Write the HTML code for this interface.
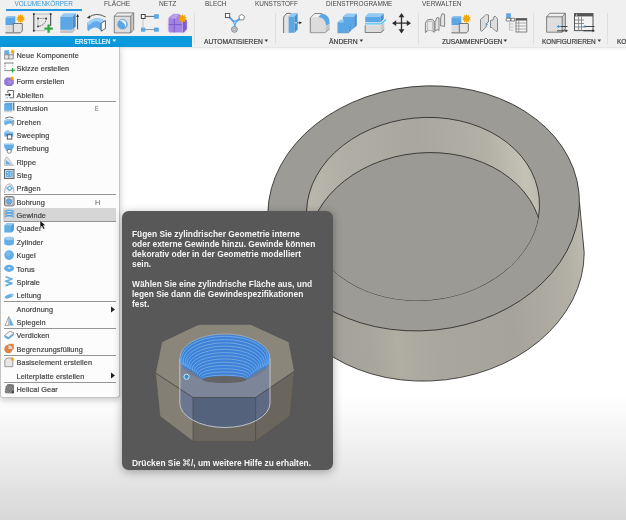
<!DOCTYPE html>
<html><head><meta charset="utf-8">
<style>
*{margin:0;padding:0;box-sizing:border-box}
html,body{width:626px;height:520px;overflow:hidden}
body{position:relative;will-change:transform;font-family:"Liberation Sans",sans-serif;background:linear-gradient(to bottom,#ffffff 0px,#ffffff 395px,#f2f2f2 440px,#dedede 500px,#d8d8d8 520px)}
.abs{position:absolute}
#tb{position:absolute;left:0;top:0;width:626px;height:47px;background:#f0f0f0}
#tbsh{position:absolute;left:0;top:46.5px;width:626px;height:4.5px;background:linear-gradient(to bottom,#dedede,rgba(240,240,240,0.6) 40%,rgba(255,255,255,0))}
.tab{position:absolute;top:-0.1px;font-size:6.4px;color:#484848;white-space:nowrap;line-height:8px}
.lbl{position:absolute;top:37px;font-size:6.7px;color:#3e3e3e;-webkit-text-stroke:0.2px #3e3e3e;white-space:nowrap;line-height:9px}
.tri{position:absolute;top:39.6px;width:0;height:0;border-left:1.8px solid transparent;border-right:1.8px solid transparent;border-top:2.4px solid #3a3a3a}
.sep{position:absolute;top:13px;width:1px;height:31px;background:#dfdfdf}
#menu{position:absolute;left:0;top:47px;width:120px;height:351.3px;background:#fcfcfc;border:1px solid #c4c4c4;border-top:none;border-radius:0 0 3px 3px;box-shadow:0 2px 6px rgba(0,0,0,.22)}
.mi{position:absolute;left:16.5px;font-size:7.3px;color:#444444;letter-spacing:0.1px;-webkit-text-stroke:0.2px #444444;white-space:nowrap;line-height:10px}
.ms{position:absolute;left:3.8px;width:112.5px;height:1px;background:#959595}
#tip{position:absolute;left:122px;top:211px;width:211px;height:259px;background:#585858;border-radius:6.5px;box-shadow:0 2px 10px rgba(0,0,0,.32)}
.tt{position:absolute;left:10px;font-size:8.4px;font-weight:bold;color:#f5f5f5;line-height:10px;white-space:nowrap}
</style></head><body>

<!-- 3D ring -->
<svg class="abs" style="left:0;top:0" width="626" height="520" viewBox="0 0 626 520"><defs>
<linearGradient id="side" gradientUnits="userSpaceOnUse" x1="268" y1="0" x2="586" y2="0">
<stop offset="0" stop-color="#9f9d95"/><stop offset="0.3" stop-color="#a8a59c"/><stop offset="0.38" stop-color="#b0ada3"/><stop offset="0.5" stop-color="#a9a69d"/><stop offset="0.75" stop-color="#a6a39b"/><stop offset="0.93" stop-color="#b1aea4"/><stop offset="1" stop-color="#bdbaaf"/>
</linearGradient>
<linearGradient id="wall" gradientUnits="userSpaceOnUse" x1="306" y1="0" x2="540" y2="0">
<stop offset="0" stop-color="#bab7ac"/><stop offset="0.2" stop-color="#b0aea4"/><stop offset="0.5" stop-color="#a8a69e"/><stop offset="0.8" stop-color="#b3b0a6"/><stop offset="0.95" stop-color="#c4c1b5"/><stop offset="1" stop-color="#bdbab0"/>
</linearGradient>

<clipPath id="holeclip"><ellipse cx="423.01" cy="208.94" rx="116.7" ry="91.3" transform="rotate(-5.44 423.01 208.94)"/></clipPath>
</defs>
<path d="M579.46,202.21 L584.19,252.92 L276.69,264.64 L267.84,214.55 Z" fill="url(#side)"/>
<ellipse cx="430.44" cy="258.78" rx="154.05" ry="121.98" transform="rotate(-5.87 430.44 258.78)" fill="url(#side)"/>
<path d="M584.19,252.92 A154.05,121.98 -5.87 0 1 276.69,264.64" fill="none" stroke="#262626" stroke-width="0.8"/>
<path d="M579.46,202.21 L584.19,252.92" stroke="#262626" stroke-width="0.8"/>
<ellipse cx="423.65" cy="208.38" rx="156.13" ry="122.16" transform="rotate(-5.87 423.65 208.38)" fill="#9c9b96" stroke="#262626" stroke-width="0.8"/>
<ellipse cx="423.01" cy="208.94" rx="116.7" ry="91.3" transform="rotate(-5.44 423.01 208.94)" fill="url(#wall)" stroke="#262626" stroke-width="0.8"/>
<g clip-path="url(#holeclip)"><ellipse cx="425.01" cy="244.54" rx="117.24" ry="91.72" transform="rotate(-5.44 425.01 244.54)" fill="#9b9a95" stroke="#262626" stroke-width="0.8"/></g></svg>
<!-- toolbar -->
<div id="tb">
<div class="tab" style="left:14.4px;font-size:6.4px;transform:scaleX(1.000);transform-origin:0 0;color:#3598d8">VOLUMENKÖRPER</div>
<div class="abs" style="left:6.3px;top:9.2px;width:76px;height:2px;background:#1f9ae0"></div>
<div class="tab" style="left:103.8px;font-size:6.4px;transform:scaleX(1.038);transform-origin:0 0;">FLÄCHE</div>
<div class="tab" style="left:159.2px;font-size:6.4px;transform:scaleX(1.041);transform-origin:0 0;">NETZ</div>
<div class="tab" style="left:205.4px;font-size:6.4px;transform:scaleX(1.008);transform-origin:0 0;">BLECH</div>
<div class="tab" style="left:254.8px;font-size:6.4px;transform:scaleX(1.008);transform-origin:0 0;">KUNSTSTOFF</div>
<div class="tab" style="left:326.2px;font-size:6.4px;transform:scaleX(1.005);transform-origin:0 0;">DIENSTPROGRAMME</div>
<div class="tab" style="left:421.8px;font-size:6.4px;transform:scaleX(1.015);transform-origin:0 0;">VERWALTEN</div>
<div class="abs" style="left:0;top:36px;width:192px;height:11px;background:#0b9ade"></div>
<div class="lbl" style="left:74.8px;font-size:6.7px;transform:scaleX(0.903);transform-origin:0 0;color:#fff;-webkit-text-stroke:0.2px #fff">ERSTELLEN</div>
<svg class="abs" style="left:112.1px;top:39px" width="5" height="4" viewBox="0 0 5 4"><path d="M0.5 0.6 H4.1 L2.3 2.9 Z" fill="#fff"/></svg>
<div class="sep" style="left:194px"></div>
<div class="lbl" style="left:204.0px;font-size:6.7px;transform:scaleX(0.998);transform-origin:0 0;">AUTOMATISIEREN</div>
<svg class="abs" style="left:263.7px;top:39px" width="5" height="4" viewBox="0 0 5 4"><path d="M0.5 0.6 H4.1 L2.3 2.9 Z" fill="#3a3a3a"/></svg>
<div class="sep" style="left:275px"></div>
<div class="lbl" style="left:329.3px;font-size:6.7px;transform:scaleX(1.014);transform-origin:0 0;">ÄNDERN</div>
<svg class="abs" style="left:358.5px;top:39px" width="5" height="4" viewBox="0 0 5 4"><path d="M0.5 0.6 H4.1 L2.3 2.9 Z" fill="#3a3a3a"/></svg>
<div class="sep" style="left:418px"></div>
<div class="lbl" style="left:441.6px;font-size:6.7px;transform:scaleX(0.982);transform-origin:0 0;">ZUSAMMENFÜGEN</div>
<svg class="abs" style="left:502.5px;top:39px" width="5" height="4" viewBox="0 0 5 4"><path d="M0.5 0.6 H4.1 L2.3 2.9 Z" fill="#3a3a3a"/></svg>
<div class="sep" style="left:533px"></div>
<div class="lbl" style="left:541.7px;font-size:6.7px;transform:scaleX(0.965);transform-origin:0 0;">KONFIGURIEREN</div>
<svg class="abs" style="left:597.3px;top:39px" width="5" height="4" viewBox="0 0 5 4"><path d="M0.5 0.6 H4.1 L2.3 2.9 Z" fill="#3a3a3a"/></svg>
<div class="sep" style="left:607px"></div>
<div class="lbl" style="left:616.8px;font-size:6.7px;transform:scaleX(0.965);transform-origin:0 0;">KONFIGURIEREN</div>

<svg class="abs" style="left:0;top:0" width="626" height="47" viewBox="0 0 626 47"><g transform="translate(0,0)">
<path d="M5.5 19 Q5.5 16.2 8.3 16.2 H15.3 V25 H5.5 Z" fill="#5ba6e4"/>
<path d="M5.5 19 Q5.5 16.2 8.3 16.2 H15.3 L14 18 H6.5 Z" fill="#93c9f3" opacity=".7"/>
<rect x="5.5" y="25" width="7.8" height="7.6" fill="#dcdcdc"/>
<path d="M13.3 23.5 H22.5 V31 L20.5 32.6 H13.3 Z" fill="#e4e4e4"/>
<path d="M13.3 23.3 V32.8 M13.3 23.5 H22 M22.3 23.5 V31 L20.5 32.8 H5.5" stroke="#666" stroke-width=".9" fill="none"/>
<path d="M5.5 32.8 H20.5" stroke="#9a9a9a" stroke-width="1"/>
<polygon points="20.60,14.00 21.50,15.84 23.30,14.88 22.95,16.90 24.97,17.18 23.50,18.60 24.97,20.02 22.95,20.30 23.30,22.32 21.50,21.36 20.60,23.20 19.70,21.36 17.90,22.32 18.25,20.30 16.23,20.02 17.70,18.60 16.23,17.18 18.25,16.90 17.90,14.88 19.70,15.84" fill="#f5a500"/>
</g>
<rect x="33.8" y="14" width="16.9" height="16.7" fill="#e9e9e9"/>
<path d="M33.8 14 V30.7 M50.7 14 V26" stroke="#3a3a3a" stroke-width="1"/>
<path d="M33.8 14 H50.7 M33.8 30.7 H45" stroke="#b5b5b5" stroke-width=".9"/>
<circle cx="33.8" cy="14" r="1" fill="#333"/><circle cx="50.7" cy="14" r="1" fill="#333"/><circle cx="33.8" cy="30.7" r="1" fill="#333"/>
<path d="M38 18.4 H46.2" stroke="#555" stroke-width=".7" stroke-dasharray="1.4 .8"/>
<path d="M38 18.4 V26.4" stroke="#aaa" stroke-width=".7"/>
<path d="M46.2 18.4 Q45.5 25.5 38 26.4" stroke="#444" stroke-width=".8" fill="none" stroke-dasharray="1.6 .8"/>
<circle cx="38" cy="18.4" r=".9" fill="#333"/><circle cx="46.2" cy="18.4" r=".9" fill="#333"/><circle cx="38" cy="26.4" r=".9" fill="#333"/>
<path d="M44.4 28.6 H52.8 M48.6 24.4 V32.8" stroke="#2fa83d" stroke-width="2.3"/>
<path d="M60.3 29.8 H72.4 L75.2 27 V29.8 L72.4 32.9 H60.3 Z" fill="#c4c4c4"/>
<path d="M60.3 29.8 H72.4 L75.2 27" stroke="#f4f4f4" stroke-width=".8" fill="none"/>
<path d="M60.3 16.9 H72.39999999999999 V29.799999999999997 H60.3 Z" fill="#5ba6e4"/><path d="M60.3 16.9 L63.599999999999994 13.27 H75.69999999999999 L72.39999999999999 16.9 Z" fill="#93c9f3"/><path d="M72.39999999999999 16.9 L75.69999999999999 13.27 V26.169999999999998 L72.39999999999999 29.799999999999997 Z" fill="#4690d2"/>
<path d="M77.6 29.4 V16" stroke="#333" stroke-width=".9"/><path d="M76.2 17 L77.6 13.8 L79 17 Z" fill="#333"/>
<path d="M88.8 17.2 Q96.5 11.8 105.6 17" stroke="#333" stroke-width=".8" fill="none"/>
<path d="M86.8 17.9 L89.9 15.3 L90.2 18.6 Z" fill="#333"/>
<path d="M87.3 22.8 Q95.5 14.8 104.6 20.6 L105.6 20.6 V28.6 L101.2 31.2 Q95.5 24 88.3 31.2 L87.3 29.5 Z" fill="#62aaea"/>
<path d="M87.3 22.8 Q95.5 14.8 104.6 20.6 L101.2 23.1 Q95 18.6 89 25.2 Z" fill="#a0d1f6"/>
<path d="M101.2 23.1 L105.4 20.6 V28.6 L101.2 31.2 Z" fill="#fff" stroke="#333" stroke-width=".7"/>
<path d="M114.3 16.2 H130.7 V32.9 H114.3 Z" fill="#dedede"/><path d="M114.3 16.2 L117.3 12.899999999999999 H133.7 L130.7 16.2 Z" fill="#f0f0f0"/><path d="M130.7 16.2 L133.7 12.899999999999999 V29.599999999999998 L130.7 32.9 Z" fill="#c9c9c9"/><path d="M114.3 16.2 L117.3 12.899999999999999 H133.7 V29.599999999999998 L130.7 32.9 H114.3 Z M114.3 16.2 H130.7 L133.7 12.899999999999999 M130.7 16.2 V32.9" fill="none" stroke="#5a5a5a" stroke-width=".7"/>
<circle cx="122.5" cy="24.3" r="5" fill="#5ba6e4" stroke="#9a9a9a" stroke-width=".8" stroke-dasharray="1.2 .6"/>
<path d="M119.5 20.3 Q124 19 126 22 Q127 25 125.5 27 Q124.8 22.5 119.5 20.3 Z" fill="#f4f4f4"/>
<path d="M145 16.4 H154" stroke="#555" stroke-width=".9"/>
<path d="M143 18.6 V27.7" stroke="#bdbdbd" stroke-width=".9"/>
<path d="M145 29.6 H154" stroke="#8a8a8a" stroke-width=".9"/>
<rect x="141.3" y="14.5" width="3.8" height="4" fill="#fff" stroke="#333" stroke-width=".9"/>
<rect x="154" y="14.2" width="4.8" height="4.5" fill="#5ba6e4"/>
<rect x="141" y="27.6" width="4.2" height="4.1" fill="#5ba6e4"/>
<rect x="154" y="27.6" width="4.8" height="4.1" fill="#5ba6e4"/>
<path d="M168.3 20 Q168.3 17.5 170.5 16 L173.5 14 H179 L185.5 19 Q187 20.5 187 22.5 V29 L184 32.6 H171 Q168.3 32.6 168.3 30 Z" fill="#a283e4" stroke="#c9b6f2" stroke-width=".7"/>
<path d="M168.8 19.5 L173.8 14.5 H179 L176 18.5 H170 Z" fill="#b9a2ee"/>
<path d="M182.5 22.5 L186.6 20 V29 L183.5 32.3 H182.5 Z" fill="#7e5dcc"/>
<path d="M174.3 19 V32.3 M168.8 24.6 H182.3" stroke="#7a55c8" stroke-width=".9"/>
<path d="M182.3 19 V32.5" stroke="#d2c3f5" stroke-width=".6"/>
<polygon points="182.60,13.80 183.40,15.93 185.30,14.68 184.70,16.87 186.97,16.98 185.20,18.40 186.97,19.82 184.70,19.93 185.30,22.12 183.40,20.87 182.60,23.00 181.80,20.87 179.90,22.12 180.50,19.93 178.23,19.82 180.00,18.40 178.23,16.98 180.50,16.87 179.90,14.68 181.80,15.93" fill="#f5a500"/>
<path d="M228.6 16.4 L233.4 21.4 M240.3 18.6 L236.2 21.4" stroke="#4fa1e2" stroke-width="1.9"/>
<path d="M232.2 20.6 H237.4 L234.8 26.6 Z" fill="#4fa1e2"/><path d="M233.9 21.8 H235.8 L234.85 24 Z" fill="#e8e8e8"/>
<path d="M234.8 25 V27" stroke="#4fa1e2" stroke-width="1.2"/>
<rect x="225.4" y="13.5" width="4.3" height="4.1" fill="#fff" stroke="#505050" stroke-width=".9"/>
<polygon points="241.7,14.4 244.6,16.5 243.5,19.9 239.9,19.9 238.8,16.5" fill="#fff" stroke="#6a6a6a" stroke-width=".8"/>
<circle cx="234.4" cy="29.4" r="2.9" fill="#d6d6d6" stroke="#7a8a98" stroke-width="1"/><circle cx="234.4" cy="29.4" r="1.3" fill="none" stroke="#8a8a8a" stroke-width=".6"/>
<path d="M283.6 17 L286.6 13.4 H291 V33 H283.6 Z" fill="#e3e3e3"/>
<path d="M283.6 33 V17 L286.6 13.4 H291" stroke="#555" stroke-width=".8" fill="none"/>
<path d="M288.6 16.4 H294.6 V32.8 H288.6 Z" fill="#5ba6e4"/><path d="M288.6 16.4 L291.6 13.099999999999998 H297.6 L294.6 16.4 Z" fill="#93c9f3"/><path d="M294.6 16.4 L297.6 13.099999999999998 V29.499999999999996 L294.6 32.8 Z" fill="#4690d2"/>
<path d="M295 22.8 H299.8" stroke="#fff" stroke-width=".9"/><path d="M297 22.8 H300" stroke="#333" stroke-width=".8"/><path d="M299.3 21.3 L302 22.8 L299.3 24.3 Z" fill="#333"/>
<path d="M310.3 17.9 L314.7 13.5 H321.7 Q329.8 14.5 329.6 24 V28.9 L325.2 32.6 H310.3 Z" fill="#dcdcdc"/>
<path d="M314.7 13.5 H321.7 L318.2 17 Q314 16.8 310.3 17.9 Z" fill="#f2f2f2"/>
<path d="M321.7 13.5 Q329.8 14.5 329.6 24 L326.1 25.4 Q325.5 17.8 318.2 17 Z" fill="#5ba6e4"/>
<path d="M326.1 25.4 L329.6 24 V28.9 L325.2 32.6 Z" fill="#c6c6c6"/>
<path d="M310.3 32.8 V17.9 L314.7 13.5 H321.7" stroke="#6a6a6a" stroke-width=".8" fill="none"/>
<path d="M310.3 32.7 H325.2 L329.6 28.9" stroke="#777" stroke-width=".7" fill="none"/>
<path d="M342.8 16.6 L346.3 13.5 H356.8 L354.2 16.6 Z" fill="#93c9f3"/>
<path d="M342.8 16.6 H354.2 V28 H342.8 Z" fill="#5ba6e4"/>
<path d="M354.2 16.6 L356.8 13.5 V25.4 L354.2 28 Z" fill="#4690d2"/>
<path d="M337.5 22.3 L340.1 19.7 H343.7 V22.3 Z" fill="#93c9f3"/>
<path d="M337.5 22.3 H348.5 V32.9 H337.5 Z" fill="#5ba6e4"/>
<path d="M348.5 28 L350.9 26.2 V30.3 L348.5 32.9 Z" fill="#4690d2"/>
<path d="M348.5 28 H354.2 L350.9 30.3 Z" fill="#5ba6e4"/>
<path d="M337.5 32.9 H348.5 L350.9 30.3" stroke="#5a86b0" stroke-width=".5" fill="none"/>
<path d="M365.2 16.5 H380.7 V22.3 H365.2 Z" fill="#5ba6e4"/><path d="M365.2 16.5 L368.2 13.2 H383.7 L380.7 16.5 Z" fill="#93c9f3"/><path d="M380.7 16.5 L383.7 13.2 V19.0 L380.7 22.3 Z" fill="#4690d2"/>
<path d="M365 23.8 H381.2 L386 19.6" stroke="#4cc0f5" stroke-width="1.3" fill="none"/>
<path d="M365.2 25.2 H381 L384.2 22.4 V29.7 L381 32.5 H365.2 Z" fill="#dcdcdc"/>
<path d="M381 25.2 L384.2 22.4 V29.7 L381 32.5 Z" fill="#c8c8c8"/>
<path d="M365.2 25.2 V32.5 H381 L384.2 29.7" stroke="#666" stroke-width=".8" fill="none"/>
<path d="M401.5 16 V30.5 M394.5 23.2 H409" stroke="#2e2e2e" stroke-width="1.3"/>
<path d="M401.5 13 L398.6 17.2 H404.4 Z M401.5 33.5 L398.6 29.2 H404.4 Z M392 23.2 L396.2 20.3 V26.1 Z M411 23.2 L406.8 20.3 V26.1 Z" fill="#2e2e2e"/>
<path d="M425.4 32.5 V23 L427.5 19.7 L432.4 19.3 L434.2 21.2 V32.3 L432.6 31 L428.5 30 Z" fill="#dedede" stroke="#6e6e6e" stroke-width=".8" stroke-linejoin="round"/>
<path d="M427.6 30 V21.5 H432.4 V30.8" fill="#ececec" stroke="#9a9a9a" stroke-width=".5"/>
<path d="M435 31 V22.2 L436.9 17.6 L439 17.9 V30.6 L437.6 29.5 Z" fill="#e2e2e2" stroke="#6e6e6e" stroke-width=".8" stroke-linejoin="round"/>
<path d="M440.6 26 V17.5 L442.1 13.6 L444.6 14.5 V26.6 L443 26 Z" fill="#e4e4e4" stroke="#6e6e6e" stroke-width=".8" stroke-linejoin="round"/>
<g transform="translate(446,0)">
<path d="M5.5 19 Q5.5 16.2 8.3 16.2 H15.3 V25 H5.5 Z" fill="#5ba6e4"/>
<path d="M5.5 19 Q5.5 16.2 8.3 16.2 H15.3 L14 18 H6.5 Z" fill="#93c9f3" opacity=".7"/>
<rect x="5.5" y="25" width="7.8" height="7.6" fill="#dcdcdc"/>
<path d="M13.3 23.5 H22.5 V31 L20.5 32.6 H13.3 Z" fill="#e4e4e4"/>
<path d="M13.3 23.3 V32.8 M13.3 23.5 H22 M22.3 23.5 V31 L20.5 32.8 H5.5" stroke="#666" stroke-width=".9" fill="none"/>
<path d="M5.5 32.8 H20.5" stroke="#9a9a9a" stroke-width="1"/>
<polygon points="20.60,14.00 21.50,15.84 23.30,14.88 22.95,16.90 24.97,17.18 23.50,18.60 24.97,20.02 22.95,20.30 23.30,22.32 21.50,21.36 20.60,23.20 19.70,21.36 17.90,22.32 18.25,20.30 16.23,20.02 17.70,18.60 16.23,17.18 18.25,16.90 17.90,14.88 19.70,15.84" fill="#f5a500"/>
</g>
<path d="M480.5 19.5 L486 14.6 L488.5 15 V22 L486.2 23 V27 L481.5 31.5 L480.5 30 Z" fill="#dcdcdc" stroke="#707070" stroke-width=".8" stroke-linejoin="round"/>
<path d="M486 14.8 V23" stroke="#f2f2f2" stroke-width=".9"/>
<circle cx="486.9" cy="24.2" r="1" fill="#4aa3ea"/>
<path d="M490.5 20.5 L493 20 L494 16.5 L495.5 16.5 L497.5 19 V31 L496 31.5 L492 27.5 H490.5 Z" fill="#dedede" stroke="#707070" stroke-width=".8" stroke-linejoin="round"/>
<rect x="506.2" y="13.3" width="4.6" height="4.8" fill="#5ba6e4"/>
<path d="M506.2 18.3 H510.6 V21 H506.2 Z M511 18.3 H514.6 V21 H511 Z" fill="#fff" stroke="#555" stroke-width=".7"/>
<path d="M509.5 21.5 V30.5 M509.5 24 H513.5 M509.5 27 H513.5 M509.5 30 H513.5" stroke="#aaa" stroke-width=".6"/>
<rect x="516" y="18.5" width="10.8" height="13.5" fill="#f6f6f6" stroke="#666" stroke-width=".8"/>
<rect x="516" y="18.5" width="10.8" height="2" fill="#555"/>
<path d="M516 23 H526.8 M516 26 H526.8 M516 29 H526.8 M518.8 20.5 V32" stroke="#777" stroke-width=".6"/>
<path d="M546.6 16.8 H562.2 V32.2 H546.6 Z" fill="#dedede"/><path d="M546.6 16.8 L549.8000000000001 13.280000000000001 H565.4000000000001 L562.2 16.8 Z" fill="#eeeeee"/><path d="M562.2 16.8 L565.4000000000001 13.280000000000001 V28.680000000000003 L562.2 32.2 Z" fill="#cfcfcf"/><path d="M546.6 16.8 L549.8000000000001 13.280000000000001 H565.4000000000001 V28.680000000000003 L562.2 32.2 H546.6 Z M546.6 16.8 H562.2 L565.4000000000001 13.280000000000001 M562.2 16.8 V32.2" fill="none" stroke="#555" stroke-width=".7"/>
<path d="M558 26.5 H567.5 M557 30.8 H566.5" stroke="#333" stroke-width=".9"/>
<path d="M556.5 26.5 L559 25 V28 Z" fill="#3a8fd8"/><path d="M568 30.8 L565.5 29.3 V32.3 Z" fill="#333"/>
<path d="M558 26.5 H561" stroke="#3a8fd8" stroke-width="1"/>
<rect x="574.5" y="13.6" width="18.5" height="17" fill="#f4f4f4" stroke="#555" stroke-width="1"/>
<rect x="574.5" y="13.6" width="18.5" height="2.8" fill="#555"/>
<circle cx="576.6" cy="15" r=".7" fill="#ddd"/>
<path d="M575 20 H584 M575 23.5 H584 M575 27 H584 M578.6 16.4 V30.5 M581.5 16.4 V30.5" stroke="#777" stroke-width=".8"/>
<path d="M584.5 26.5 H594.5 M583.5 30.8 H593.5" stroke="#333" stroke-width=".9"/>
<path d="M583 26.5 L585.5 25 V28 Z" fill="#3a8fd8"/><path d="M595 30.8 L592.5 29.3 V32.3 Z" fill="#333"/></svg>
</div>

<div id="tbsh"></div>
<!-- menu -->
<div id="menu"></div>
<div class="abs" style="left:3px;top:207.9px;width:113px;height:13.1px;background:#d6d6d6"></div>
<div class="mi" style="top:50.67px">Neue Komponente</div>
<svg class="abs" style="left:4px;top:49.0px" width="11" height="11" viewBox="0 0 11 11"><path d="M0.3 2.5 Q0.3 1.3 1.5 1.3 H5 V5.8 H0.3 Z" fill="#62aee6"/><rect x="5" y="3" width="4.5" height="2.8" fill="#e4e4e4"/><path d="M0.3 5.8 H9.3 V10 H0.3 Z" fill="#e6e6e6"/><path d="M0.3 5.8 H9.3 M4.8 5.8 V10 M0.3 10 H9.3 M0.3 5.8 V10 M9.3 3 V10" stroke="#6a6a6a" stroke-width=".7" fill="none"/><polygon points="8.60,-0.20 9.02,1.38 10.44,0.56 9.62,1.98 11.20,2.40 9.62,2.82 10.44,4.24 9.02,3.42 8.60,5.00 8.18,3.42 6.76,4.24 7.58,2.82 6.00,2.40 7.58,1.98 6.76,0.56 8.18,1.38" fill="#f5a500"/></svg>
<div class="mi" style="top:64.04px">Skizze erstellen</div>
<svg class="abs" style="left:4px;top:62.37px" width="11" height="11" viewBox="0 0 11 11"><path d="M0.2 1 H9.5" stroke="#555" stroke-width=".7"/><path d="M1 1 V8.6" stroke="#555" stroke-width=".7" stroke-dasharray="1.5 .9"/><path d="M0.2 8.6 H6" stroke="#666" stroke-width=".7"/><path d="M8.6 1 V4.5" stroke="#777" stroke-width=".6" stroke-dasharray="1 .8"/><path d="M6.3 8.3 H10.9 M8.6 6 V10.6" stroke="#2fa83d" stroke-width="1.3"/></svg>
<div class="mi" style="top:77.41px">Form erstellen</div>
<svg class="abs" style="left:4px;top:75.74px" width="11" height="11" viewBox="0 0 11 11"><path d="M2.5 1.5 H6.5 L9.8 4 V8 L7.5 10 H2.5 L0.2 8 V4 Z" fill="#9478d8"/><path d="M3 5 L6.5 4 L8.5 7 L5 8.5 Z" fill="#a88fe2" opacity=".8"/><polygon points="8.20,-0.30 8.62,1.28 10.04,0.46 9.22,1.88 10.80,2.30 9.22,2.72 10.04,4.14 8.62,3.32 8.20,4.90 7.78,3.32 6.36,4.14 7.18,2.72 5.60,2.30 7.18,1.88 6.36,0.46 7.78,1.28" fill="#f5a500"/></svg>
<div class="mi" style="top:90.78px">Ableiten</div>
<svg class="abs" style="left:4px;top:89.11px" width="11" height="11" viewBox="0 0 11 11"><path d="M3.8 1.5 H9.6 V8.8 H5.5" fill="none" stroke="#444" stroke-width=".8"/><path d="M3.8 1.5 V4" stroke="#444" stroke-width=".8"/><path d="M1 5.8 H6.3" stroke="#222" stroke-width=".9"/><path d="M4.8 4 L7 5.8 L4.8 7.6 Z" fill="#222"/><path d="M1.5 8.8 H4" stroke="#444" stroke-width=".6" stroke-dasharray="1 .6"/></svg>
<div class="mi" style="top:104.15px">Extrusion</div>
<svg class="abs" style="left:4px;top:102.48px" width="11" height="11" viewBox="0 0 11 11"><path d="M0.2 8.8 H7.2 L8.5 7.8 V9.3 L7.2 10.2 H0.2 Z" fill="#d0d0d0"/><path d="M0.2 2.2 L1.7 0.7 H8.5 V7.5 L7.2 8.8 H0.2 Z" fill="#62aee6"/><path d="M0.2 2.2 H7.2 V8.8 M7.2 2.2 L8.5 0.7" stroke="#3f8fcf" stroke-width=".4" fill="none"/><path d="M9.8 0.5 V8.6" stroke="#333" stroke-width=".9"/></svg>
<div class="mi" style="top:117.52px">Drehen</div>
<svg class="abs" style="left:4px;top:115.85px" width="11" height="11" viewBox="0 0 11 11"><path d="M1 2.3 Q5 -0.3 9.5 2" stroke="#333" stroke-width=".7" fill="none"/><path d="M0.3 4.5 Q5 1.8 9.8 4.5 V8.5 Q5 6 1.5 9.5 L0.3 8 Z" fill="#62aee6"/><path d="M0.3 4.5 Q5 1.8 9.8 4.5 L8.3 5.6 Q5 3.8 1.8 5.8 Z" fill="#9ccbf0"/><path d="M8.3 5.6 L9.8 4.5 V8.5 L8.3 9.5 Z" fill="#eee" stroke="#555" stroke-width=".5"/></svg>
<div class="mi" style="top:130.89px">Sweeping</div>
<svg class="abs" style="left:4px;top:129.22px" width="11" height="11" viewBox="0 0 11 11"><path d="M0.3 3.8 Q1 1.5 4 1.2 H5 V2.5 L9.3 3 V7.5 H0.3 Z" fill="#62aee6"/><path d="M0.3 3.8 Q1 1.5 4 1.2 H5 V2.5 L9.3 3 L8 4 H1.5 Z" fill="#9ccbf0"/><rect x="3.3" y="5.8" width="4.5" height="4.3" fill="#fff" stroke="#444" stroke-width=".9"/></svg>
<div class="mi" style="top:144.26px">Erhebung</div>
<svg class="abs" style="left:4px;top:142.59px" width="11" height="11" viewBox="0 0 11 11"><path d="M0.2 0.8 H9.8 V4 L7.5 8 H2.5 L0.2 4 Z" fill="#62aee6"/><path d="M0.2 0.8 H9.8 L8.8 2 H1.2 Z" fill="#9ccbf0"/><circle cx="5.2" cy="8.3" r="2" fill="#fff" stroke="#555" stroke-width=".7"/></svg>
<div class="mi" style="top:157.63px">Rippe</div>
<svg class="abs" style="left:4px;top:155.96px" width="11" height="11" viewBox="0 0 11 11"><path d="M0.5 9.5 V4 L2.5 0.8 Q3.5 0.8 4 2 L9.5 9.5 Z" fill="#e2e2e2" stroke="#9a9a9a" stroke-width=".5"/><path d="M1.8 8.5 V4 L7.5 8.5 Z" fill="#62aee6"/></svg>
<div class="mi" style="top:171.00px">Steg</div>
<svg class="abs" style="left:4px;top:169.33px" width="11" height="11" viewBox="0 0 11 11"><rect x="0.5" y="0.5" width="9.5" height="9" fill="#d0d0d0" stroke="#5a5a5a" stroke-width=".9"/><rect x="2" y="2" width="6.5" height="6" fill="#62aee6"/><path d="M2.8 2.8 L4.5 4.5 M7.8 2.8 L6 4.5 M2.8 7.3 L4.5 5.6 M7.8 7.3 L6 5.6" stroke="#fff" stroke-width=".6"/></svg>
<div class="mi" style="top:184.37px">Prägen</div>
<svg class="abs" style="left:4px;top:182.7px" width="11" height="11" viewBox="0 0 11 11"><path d="M0.5 9.8 Q0.5 1 6 0.8 Q9.8 2 10 9.8" stroke="#9a9a9a" stroke-width=".7" fill="#f0f0f0"/><path d="M2 5 L6 2.2 L9.2 5.5 L5.2 8.2 Z" fill="#62aee6"/><path d="M4 5 L6 3.8 L7.2 5.2 L5.3 6.5 Z" fill="#fff"/></svg>
<div class="mi" style="top:197.74px">Bohrung</div>
<svg class="abs" style="left:4px;top:196.07px" width="11" height="11" viewBox="0 0 11 11"><rect x="0.5" y="0.6" width="9.5" height="9.3" rx="1.2" fill="#e0e0e0" stroke="#555" stroke-width=".8"/><rect x="1.8" y="1.8" width="7" height="7" fill="#f2f2f2" stroke="#888" stroke-width=".4"/><circle cx="5" cy="5.4" r="2.8" fill="#62aee6" stroke="#777" stroke-width=".5"/></svg>
<div class="mi" style="top:211.11px">Gewinde</div>
<svg class="abs" style="left:4px;top:209.44px" width="11" height="11" viewBox="0 0 11 11"><path d="M1 2.3 Q5 0.3 9.5 2.3 M1 5 Q5 3 9.5 5 M1 7.7 Q5 5.7 9.5 7.7" stroke="#62aee6" stroke-width="1.5" fill="none"/><path d="M1.5 3 Q5 4.5 9 3.3 M1.5 5.8 Q5 7.3 9 6" stroke="#3a84c8" stroke-width=".6" fill="none"/><path d="M0.6 1.2 V9.5 M9.8 1.2 V9.5" stroke="#888" stroke-width=".4"/></svg>
<div class="mi" style="top:224.48px">Quader</div>
<svg class="abs" style="left:4px;top:222.81px" width="11" height="11" viewBox="0 0 11 11"><path d="M0.3 2.5 L2.5 0.3 H9.8 V7.3 L7.5 9.6 H0.3 Z" fill="#62aee6"/><path d="M0.3 2.5 L2.5 0.3 H9.8 L7.5 2.5 Z" fill="#9ccbf0"/><path d="M7.5 2.5 L9.8 0.3 V7.3 L7.5 9.6 Z" fill="#3f8fcf" opacity=".6"/></svg>
<div class="mi" style="top:237.85px">Zylinder</div>
<svg class="abs" style="left:4px;top:236.18px" width="11" height="11" viewBox="0 0 11 11"><path d="M0.3 2.3 V8.3 Q5 10.8 9.9 8.3 V2.3 Z" fill="#62aee6"/><ellipse cx="5.1" cy="2.3" rx="4.8" ry="1.9" fill="#9ccbf0"/></svg>
<div class="mi" style="top:251.22px">Kugel</div>
<svg class="abs" style="left:4px;top:249.55px" width="11" height="11" viewBox="0 0 11 11"><circle cx="5.1" cy="5.1" r="4.8" fill="#62aee6"/><circle cx="4" cy="3.8" r="2.5" fill="#9ccbf0" opacity=".45"/></svg>
<div class="mi" style="top:264.59px">Torus</div>
<svg class="abs" style="left:4px;top:262.92px" width="11" height="11" viewBox="0 0 11 11"><ellipse cx="5.1" cy="5.3" rx="4.9" ry="3.6" fill="#62aee6"/><ellipse cx="5.1" cy="5" rx="2" ry="1" fill="#e2eef8" stroke="#4a90d0" stroke-width=".4"/></svg>
<div class="mi" style="top:277.96px">Spirale</div>
<svg class="abs" style="left:4px;top:276.29px" width="11" height="11" viewBox="0 0 11 11"><path d="M1.5 0.8 L8 3 L1.5 5.2 L8 7.4 L1.5 9.6" stroke="#62aee6" stroke-width="1.7" fill="none" stroke-linejoin="round"/></svg>
<div class="mi" style="top:291.33px">Leitung</div>
<svg class="abs" style="left:4px;top:289.66px" width="11" height="11" viewBox="0 0 11 11"><ellipse cx="5.2" cy="6.2" rx="4.6" ry="1.8" transform="rotate(-22 5.2 6.2)" fill="#62aee6"/><ellipse cx="8.3" cy="4.9" rx="1.2" ry="1.3" transform="rotate(-22 8.3 4.9)" fill="#9ccbf0"/></svg>
<div class="mi" style="top:304.70px">Anordnung</div>
<div class="mi" style="top:318.07px">Spiegeln</div>
<svg class="abs" style="left:4px;top:316.4px" width="11" height="11" viewBox="0 0 11 11"><path d="M4.8 0.5 L1 9.5 H4.8 Z" fill="#f2f2f2" stroke="#777" stroke-width=".6"/><path d="M5.4 0.5 L9.8 9.5 H5.4 Z" fill="#62aee6"/></svg>
<div class="mi" style="top:331.44px">Verdicken</div>
<svg class="abs" style="left:4px;top:329.77px" width="11" height="11" viewBox="0 0 11 11"><path d="M0.5 5.5 L6 1 L10 3 L4.5 7.5 Z" fill="#f4f4f4" stroke="#666" stroke-width=".6"/><path d="M0.5 5.5 L4.5 7.5 L10 3 V5 L4.5 9.6 L0.5 7.5 Z" fill="#62aee6"/></svg>
<div class="mi" style="top:344.81px">Begrenzungsfüllung</div>
<svg class="abs" style="left:4px;top:343.14px" width="11" height="11" viewBox="0 0 11 11"><rect x="4.5" y="0.8" width="5.3" height="5.5" fill="#e8813c"/><circle cx="4.5" cy="6" r="4.2" fill="#e3823f"/><path d="M4.5 6 V2.2 A3.8 3.8 0 0 1 8.3 6 Z" fill="#c6ddf2"/></svg>
<div class="mi" style="top:358.18px">Basiselement erstellen</div>
<svg class="abs" style="left:4px;top:356.51px" width="11" height="11" viewBox="0 0 11 11"><path d="M0.8 3.2 Q1.5 1 4 1 H8.8 V9.7 H0.8 Z" fill="#e6e6e6" stroke="#777" stroke-width=".7"/><polygon points="8.40,-0.10 8.82,1.18 10.03,0.57 9.42,1.78 10.70,2.20 9.42,2.62 10.03,3.83 8.82,3.22 8.40,4.50 7.98,3.22 6.77,3.83 7.38,2.62 6.10,2.20 7.38,1.78 6.77,0.57 7.98,1.18" fill="#f5a500"/></svg>
<div class="mi" style="top:371.55px">Leiterplatte erstellen</div>
<div class="mi" style="top:384.92px">Helical Gear</div>
<svg class="abs" style="left:4px;top:383.25px" width="11" height="11" viewBox="0 0 11 11"><path d="M1.6 10.3 L0.6 8.6 L1.4 7.6 L0.7 6 L1.8 4.9 L1.4 3.5 L3 2.3 L3.2 1.3 L6 1.1 L9.6 1.4 L10 3 V9.3 L9 10.6 Z" fill="#707070"/><path d="M2.2 9.2 L6.8 2.4 M3.6 9.8 L8.4 2.6 M1.6 6.8 L4.6 2.2 M5.6 10 L9.6 4.2" stroke="#b9b9b9" stroke-width=".7" stroke-dasharray="1 .7"/><circle cx="9" cy="9.3" r="1" fill="#3a3a3a"/></svg>
<div class="ms" style="top:101.00px"></div>
<div class="ms" style="top:194.00px"></div>
<div class="ms" style="top:220.50px"></div>
<div class="ms" style="top:301.00px"></div>
<div class="ms" style="top:328.00px"></div>
<div class="ms" style="top:355.00px"></div>
<div class="ms" style="top:382.00px"></div>
<div class="mi" style="left:95.2px;top:104.15px;color:#5e5e5e;-webkit-text-stroke:0;transform:scaleX(.75);transform-origin:0 0">E</div>
<div class="mi" style="left:94.9px;top:197.74px;color:#5e5e5e;-webkit-text-stroke:0">H</div>
<svg class="abs" style="left:110px;top:305.53px" width="6" height="7" viewBox="0 0 6 7"><path d="M1 0.5 L5 3.5 L1 6.5 Z" fill="#222"/></svg>
<svg class="abs" style="left:110px;top:372.38px" width="6" height="7" viewBox="0 0 6 7"><path d="M1 0.5 L5 3.5 L1 6.5 Z" fill="#222"/></svg>

<!-- tooltip -->
<div id="tip">
  <div class="tt" style="top:17.6px">Fügen Sie zylindrischer Geometrie interne<br>oder externe Gewinde hinzu. Gewinde können<br>dekorativ oder in der Geometrie modelliert<br>sein.<br><br>Wählen Sie eine zylindrische Fläche aus, und<br>legen Sie dann die Gewindespezifikationen<br>fest.</div>
  <div class="tt" style="top:247.3px">Drücken Sie <span style="display:inline-block;width:7px;height:8px;vertical-align:-1px;margin-right:1.2px"><svg width="7" height="7" viewBox="0 0 7 7" style="display:block"><path d="M2.2 2.2 H4.8 V4.8 H2.2 Z M2.2 2.2 V1.3 A0.95 0.95 0 1 0 1.3 2.2 H2.2 M4.8 2.2 V1.3 A0.95 0.95 0 1 1 5.7 2.2 H4.8 M2.2 4.8 V5.7 A0.95 0.95 0 1 1 1.3 4.8 H2.2 M4.8 4.8 V5.7 A0.95 0.95 0 1 0 5.7 4.8 H4.8" fill="none" stroke="#f0f0f0" stroke-width="0.95"/></svg></span>/, um weitere Hilfe zu erhalten.</div>
</div>
<svg class="abs" style="left:0;top:0" width="626" height="520" viewBox="0 0 626 520"><defs>
<clipPath id="ctop"><path d="M198.75,324.4 L250.6,324.4 L288.75,341.9 L294.4,371.25 L255.6,397.5 L193,397.5 L155.6,373 L161.9,341.9 Z"/></clipPath>
<clipPath id="cleft"><path d="M155.6,373 L193,397.5 L193,441.25 L160,416.25 Z"/></clipPath>
<clipPath id="cfront"><path d="M193,397.5 L255.6,397.5 L255.6,441.25 L193,441.25 Z"/></clipPath>
<clipPath id="cright"><path d="M255.6,397.5 L294.4,371.25 L290,416 L255.6,441.25 Z"/></clipPath>
<clipPath id="cell"><ellipse cx="224.9" cy="358.5" rx="45.1" ry="24.5"/></clipPath>
</defs>
<path d="M198.75,324.4 L250.6,324.4 L288.75,341.9 L294.4,371.25 L255.6,397.5 L193,397.5 L155.6,373 L161.9,341.9 Z" fill="#8a867a"/>
<path d="M155.6,373 L193,397.5 L193,441.25 L160,416.25 Z" fill="#847f74"/>
<path d="M193,397.5 L255.6,397.5 L255.6,441.25 L193,441.25 Z" fill="#6c675e"/>
<path d="M255.6,397.5 L294.4,371.25 L290,416 L255.6,441.25 Z" fill="#6a665d"/>
<path d="M179.8,358.5 V403 A45.1,24.5 0 0 0 270.0,403 V358.5 A45.1,24.5 0 0 0 179.8,358.5 Z" fill="#7d8698" clip-path="url(#ctop)"/>
<path d="M179.8,358.5 V403 A45.1,24.5 0 0 0 270.0,403 V358.5 A45.1,24.5 0 0 0 179.8,358.5 Z" fill="#6b7690" clip-path="url(#cleft)"/>
<path d="M179.8,358.5 V403 A45.1,24.5 0 0 0 270.0,403 V358.5 A45.1,24.5 0 0 0 179.8,358.5 Z" fill="#55627b" clip-path="url(#cfront)"/>
<path d="M179.8,358.5 V403 A45.1,24.5 0 0 0 270.0,403 V358.5 A45.1,24.5 0 0 0 179.8,358.5 Z" fill="#5e6a83" clip-path="url(#cright)"/>
<path d="M198.75,324.4 L250.6,324.4 L288.75,341.9 L294.4,371.25 L255.6,397.5 L193,397.5 L155.6,373 L161.9,341.9 Z" fill="none" stroke="#4a4a46" stroke-width=".6" stroke-dasharray="1 .6"/>
<path d="M160,416.25 L193,441.25 H255.6 L290,416 M155.6,373 L160,416.25 M294.4,371.25 L290,416" fill="none" stroke="#4a4a46" stroke-width=".6" stroke-dasharray="1 .6"/>
<path d="M193,397.5 V441.25 M255.6,397.5 V441.25 M155.6,373 L193,397.5 H255.6 L294.4,371.25" stroke="#45454a" stroke-width=".6" fill="none"/>
<ellipse cx="224.9" cy="358.5" rx="45.1" ry="24.5" fill="#6f7b91"/>
<g clip-path="url(#cell)"><path d="M181.77,365.66 A45.10,24.50 0 1 1 268.03,365.66" fill="none" stroke="#3c82da" stroke-width="3"/><path d="M183.20,366.30 A43.28,22.88 0 1 1 266.54,366.30" fill="none" stroke="#3c82da" stroke-width="3"/><path d="M184.67,367.01 A41.47,21.25 0 1 1 265.01,367.01" fill="none" stroke="#3c82da" stroke-width="3"/><path d="M186.18,367.79 A39.65,19.63 0 1 1 263.43,367.79" fill="none" stroke="#3c82da" stroke-width="3"/><path d="M187.73,368.63 A37.84,18.01 0 1 1 261.82,368.63" fill="none" stroke="#3c82da" stroke-width="3"/><path d="M189.32,369.55 A36.02,16.38 0 1 1 260.17,369.55" fill="none" stroke="#3c82da" stroke-width="3"/><path d="M190.94,370.54 A34.21,14.76 0 1 1 258.49,370.54" fill="none" stroke="#3c82da" stroke-width="3"/><path d="M192.60,371.60 A32.39,13.14 0 1 1 256.77,371.60" fill="none" stroke="#3c82da" stroke-width="3"/><path d="M194.28,372.73 A30.58,11.52 0 1 1 255.03,372.73" fill="none" stroke="#3c82da" stroke-width="3"/><path d="M195.98,373.94 A28.76,9.89 0 1 1 253.26,373.94" fill="none" stroke="#3c82da" stroke-width="3"/><path d="M197.71,375.22 A26.95,8.27 0 1 1 251.48,375.22" fill="none" stroke="#3c82da" stroke-width="3"/><path d="M199.46,376.57 A25.13,6.65 0 1 1 249.67,376.57" fill="none" stroke="#3c82da" stroke-width="3"/><path d="M201.22,378.00 A23.32,5.02 0 1 1 247.84,378.00" fill="none" stroke="#3c82da" stroke-width="3"/><path d="M203.00,379.50 A21.50,3.40 0 0 1 246.00,379.50" fill="none" stroke="#3c82da" stroke-width="3"/><path d="M181.77,364.76 A45.10,24.50 0 1 1 268.03,364.76" fill="none" stroke="#7cb8f2" stroke-width=".7"/><path d="M183.20,365.40 A43.28,22.88 0 1 1 266.54,365.40" fill="none" stroke="#7cb8f2" stroke-width=".7"/><path d="M184.67,366.11 A41.47,21.25 0 1 1 265.01,366.11" fill="none" stroke="#7cb8f2" stroke-width=".7"/><path d="M186.18,366.89 A39.65,19.63 0 1 1 263.43,366.89" fill="none" stroke="#7cb8f2" stroke-width=".7"/><path d="M187.73,367.73 A37.84,18.01 0 1 1 261.82,367.73" fill="none" stroke="#7cb8f2" stroke-width=".7"/><path d="M189.32,368.65 A36.02,16.38 0 1 1 260.17,368.65" fill="none" stroke="#7cb8f2" stroke-width=".7"/><path d="M190.94,369.64 A34.21,14.76 0 1 1 258.49,369.64" fill="none" stroke="#7cb8f2" stroke-width=".7"/><path d="M192.60,370.70 A32.39,13.14 0 1 1 256.77,370.70" fill="none" stroke="#7cb8f2" stroke-width=".7"/><path d="M194.28,371.83 A30.58,11.52 0 1 1 255.03,371.83" fill="none" stroke="#7cb8f2" stroke-width=".7"/><path d="M195.98,373.04 A28.76,9.89 0 1 1 253.26,373.04" fill="none" stroke="#7cb8f2" stroke-width=".7"/><path d="M197.71,374.32 A26.95,8.27 0 1 1 251.48,374.32" fill="none" stroke="#7cb8f2" stroke-width=".7"/><path d="M199.46,375.67 A25.13,6.65 0 1 1 249.67,375.67" fill="none" stroke="#7cb8f2" stroke-width=".7"/><path d="M201.22,377.10 A23.32,5.02 0 1 1 247.84,377.10" fill="none" stroke="#7cb8f2" stroke-width=".7"/><path d="M203.00,378.60 A21.50,3.40 0 0 1 246.00,378.60" fill="none" stroke="#7cb8f2" stroke-width=".7"/></g>
<ellipse cx="224.5" cy="379.5" rx="22.0" ry="3.4" fill="#646466"/>
<path d="M179.8,358.5 V403 A45.1,24.5 0 0 0 270.0,403 V358.5" fill="none" stroke="#c9ccd2" stroke-width=".9"/>
<path d="M179.8,358.5 A45.1,24.5 0 0 1 270.0,358.5" fill="none" stroke="#c4c2b8" stroke-width=".6"/>
<circle cx="186.5" cy="376.8" r="2.6" fill="#2f8fd0" stroke="#dfe9f2" stroke-width=".9"/></svg>
<svg class="abs" style="left:0;top:0" width="626" height="520" viewBox="0 0 626 520"><path d="M40 220.6 L40.2 227.6 L41.9 226.1 L43.3 229.2 L44.7 228.5 L43.3 225.5 L45.5 225.4 Z" fill="#111" stroke="#fff" stroke-width=".5" stroke-opacity=".7"/></svg>
</body></html>
